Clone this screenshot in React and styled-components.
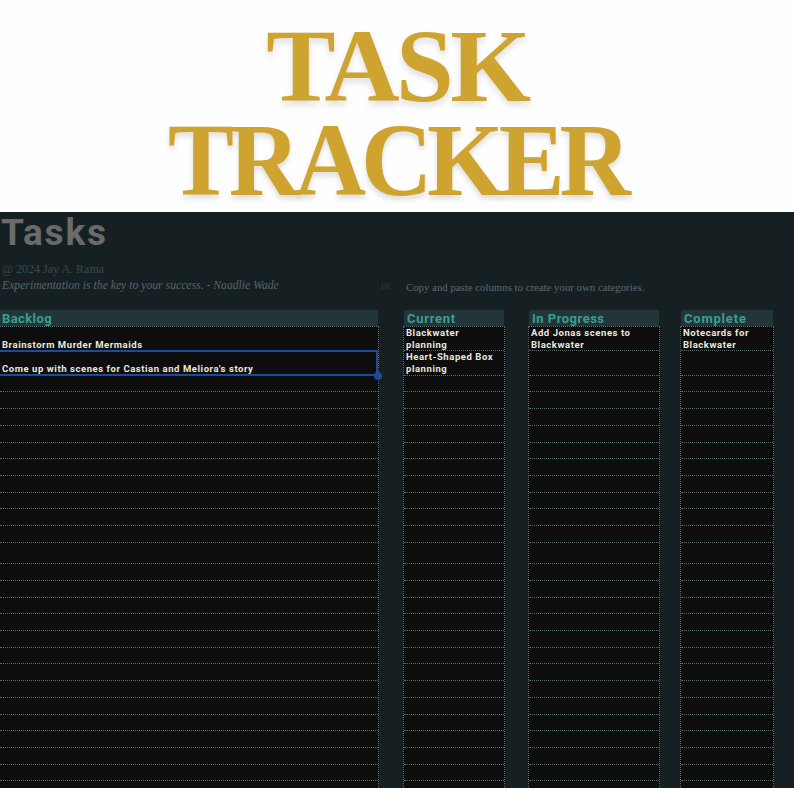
import React from 'react';
import styled, { createGlobalStyle } from 'styled-components';

const GlobalStyle = createGlobalStyle`
  html, body {
    margin: 0;
    padding: 0;
    background: #fdfefd;
  }
`;

const columns = [
  { title: 'Backlog', width: 378, gap: 26, spacing: 0.4, wide: true, tasks: ['Brainstorm Murder Mermaids', 'Come up with scenes for Castian and Meliora\'s story'] },
  { title: 'Current', width: 100, gap: 25, spacing: 0.7, tasks: ['Blackwater planning', 'Heart-Shaped Box planning'] },
  { title: 'In Progress', width: 130, gap: 22, spacing: 0.5, tasks: ['Add Jonas scenes to Blackwater'] },
  { title: 'Complete', width: 92, gap: 0, spacing: 0.8, tasks: ['Notecards for Blackwater'] },
];

const EMPTY_ROWS = 25;
const TALL_ROW = 11;

const App = () => (
  <>
    <GlobalStyle />
    <Page>
      <Hero>
        <HeroLine $spacing={-3.5}>TASK</HeroLine>
        <HeroLine $spacing={-5.5} $squeeze={0.95}>TRACKER</HeroLine>
      </Hero>

      <Sheet>
        <SheetTitle>Tasks</SheetTitle>
        <Credit>@ 2024 Jay A. Rama</Credit>
        <NoteRow>
          <Quote>Experimentation is the key to your success. - Naadlie Wade</Quote>
          <Count>18</Count>
          <Hint>Copy and paste columns to create your own categories.</Hint>
        </NoteRow>

        <Board>
          {columns.map(column => (
            <Column key={column.title} $width={column.width} $gap={column.gap}>
              <ColumnTitle $wide={column.wide} $spacing={column.spacing}>{column.title}</ColumnTitle>
              <Cells>
                {column.tasks.map((task, index) => (
                  <Cell key={task} $wide={column.wide} $selected={column.wide && index === 1}>
                    {task}
                    {column.wide && index === 1 && <Handle />}
                  </Cell>
                ))}
                {column.tasks.length < 2 && <Cell $wide={column.wide} />}
                {Array.from({ length: EMPTY_ROWS }, (_, index) => (
                  <EmptyCell key={index} $tall={index === TALL_ROW - 1} />
                ))}
              </Cells>
            </Column>
          ))}
        </Board>
      </Sheet>
    </Page>
  </>
);

export default App;

const Page = styled.div`
  width: 794px;
  height: 794px;
  overflow: hidden;
  background: #fdfefd;
  display: flex;
  flex-direction: column;
`;

const Hero = styled.div`
  height: 212px;
  flex: none;
  display: flex;
  flex-direction: column;
  align-items: center;
  padding-top: 19px;
  box-sizing: border-box;
`;

const HeroLine = styled.div`
  font-family: 'Liberation Serif', serif;
  font-weight: 700;
  font-size: 104px;
  line-height: 94px;
  letter-spacing: ${props => props.$spacing}px;
  white-space: nowrap;
  color: #cfa32f;
  text-shadow: 0 4px 6px rgba(70, 70, 70, 0.18);
  transform: scaleX(${props => props.$squeeze || 1});
`;

const Sheet = styled.div`
  height: 576px;
  flex: none;
  overflow: hidden;
  background: #162023;
`;

const SheetTitle = styled.div`
  font-family: 'Roboto', sans-serif;
  font-weight: 700;
  font-size: 37px;
  line-height: 42px;
  letter-spacing: 1.8px;
  padding-left: 1px;
  color: #696b6b;
`;

const Credit = styled.div`
  font-family: 'Liberation Serif', serif;
  font-size: 12px;
  line-height: 16px;
  margin-top: 7px;
  padding-left: 2px;
  color: #37494c;
`;

const NoteRow = styled.div`
  display: flex;
  align-items: center;
  height: 17px;
  font-family: 'Liberation Serif', serif;
`;

const Quote = styled.div`
  width: 380px;
  flex: none;
  padding-left: 2px;
  box-sizing: border-box;
  font-size: 11.7px;
  font-style: italic;
  color: #53666a;
`;

const Count = styled.div`
  width: 26px;
  flex: none;
  font-size: 9px;
  color: #2f3d40;
`;

const Hint = styled.div`
  margin-top: 2px;
  font-size: 10.8px;
  color: #59696c;
`;

const Board = styled.div`
  display: flex;
  margin-top: 16px;
`;

const Column = styled.div`
  width: ${props => props.$width}px;
  flex: none;
  margin-right: ${props => props.$gap}px;
`;

const ColumnTitle = styled.div`
  height: 16px;
  padding-left: ${props => (props.$wide ? 2 : 3)}px;
  background: #24353a;
  font-family: 'Roboto', sans-serif;
  font-weight: 700;
  font-size: 13px;
  line-height: 17px;
  letter-spacing: ${props => props.$spacing}px;
  color: #35a08f;
`;

const Cells = styled.div`
  background: #0d0d0e;
  border-left: 1px dotted #566a6d;
  border-right: 1px dotted #566a6d;
  border-top: 1px dotted #566a6d;
  margin: 0 -1px;
`;

const Cell = styled.div`
  position: relative;
  height: 24.4px;
  box-sizing: border-box;
  padding: ${props => (props.$wide ? '12px 2px 0' : '0 2px')};
  border-bottom: 1px dotted #566a6d;
  font-family: 'Roboto', sans-serif;
  font-weight: 700;
  font-size: 9.5px;
  line-height: 12px;
  letter-spacing: 0.56px;
  white-space: ${props => (props.$wide ? 'nowrap' : 'normal')};
  color: #ebe9df;
  ${props => props.$selected && `
    height: 25.4px;
    margin-top: -1px;
    padding-top: 11px;
    border-top: 2px solid #1b4c9c;
    border-right: 2px solid #1b4c9c;
    border-bottom: 2px solid #1b4c9c;
  `}
`;

const EmptyCell = styled.div`
  height: ${props => (props.$tall ? 21.7 : 16.7)}px;
  box-sizing: border-box;
  border-bottom: 1px dotted #566a6d;
`;

const Handle = styled.span`
  position: absolute;
  right: -6px;
  bottom: -6px;
  width: 8px;
  height: 8px;
  border-radius: 50%;
  background: #1b4c9c;
`;
